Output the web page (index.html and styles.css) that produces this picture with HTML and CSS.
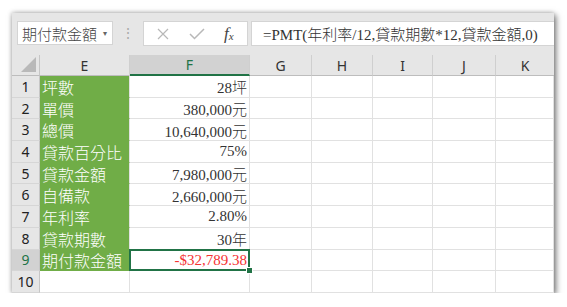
FILE: index.html
```html
<!DOCTYPE html>
<html lang="zh-Hant">
<head>
  <meta charset="UTF-8" />
  <title>期付款金額 - PMT</title>
  <link rel="stylesheet" href="styles.css">
</head>
<body>
  <div class="window">
    <div class="toolbar">
      <div class="namebox">期付款金額<span class="drop">▾</span></div>
      <div class="grip">⋮</div>
      <div class="fxbox">
        <svg class="cancel" width="12" height="12" viewBox="0 0 12 12"><path d="M1 1L11 11M11 1L1 11" stroke="#b8b8b8" stroke-width="1.2" fill="none"/></svg>
        <svg class="ok" width="16" height="12" viewBox="0 0 16 12"><path d="M1 6L5.5 10.5L15 1" stroke="#b8b8b8" stroke-width="1.5" fill="none"/></svg>
        <span class="fx">f<sub>x</sub></span>
      </div>
      <div class="formula">=PMT(年利率/12,貸款期數*12,貸款金額,0)</div>
    </div>

    <div class="sheet">
      <div class="row head">
        <div class="corner"></div>
        <div class="colhead">E</div>
        <div class="colhead active">F</div>
        <div class="colhead">G</div>
        <div class="colhead">H</div>
        <div class="colhead">I</div>
        <div class="colhead">J</div>
        <div class="colhead last">K</div>
      </div>

      <div class="row">
        <div class="num">1</div><div class="cell label">坪數</div><div class="cell val">28坪</div>
        <div class="cell"></div><div class="cell"></div><div class="cell"></div><div class="cell"></div><div class="cell"></div>
      </div>
      <div class="row">
        <div class="num">2</div><div class="cell label">單價</div><div class="cell val">380,000元</div>
        <div class="cell"></div><div class="cell"></div><div class="cell"></div><div class="cell"></div><div class="cell"></div>
      </div>
      <div class="row">
        <div class="num">3</div><div class="cell label">總價</div><div class="cell val">10,640,000元</div>
        <div class="cell"></div><div class="cell"></div><div class="cell"></div><div class="cell"></div><div class="cell"></div>
      </div>
      <div class="row">
        <div class="num">4</div><div class="cell label">貸款百分比</div><div class="cell val">75%</div>
        <div class="cell"></div><div class="cell"></div><div class="cell"></div><div class="cell"></div><div class="cell"></div>
      </div>
      <div class="row">
        <div class="num">5</div><div class="cell label">貸款金額</div><div class="cell val">7,980,000元</div>
        <div class="cell"></div><div class="cell"></div><div class="cell"></div><div class="cell"></div><div class="cell"></div>
      </div>
      <div class="row">
        <div class="num">6</div><div class="cell label">自備款</div><div class="cell val">2,660,000元</div>
        <div class="cell"></div><div class="cell"></div><div class="cell"></div><div class="cell"></div><div class="cell"></div>
      </div>
      <div class="row">
        <div class="num">7</div><div class="cell label">年利率</div><div class="cell val">2.80%</div>
        <div class="cell"></div><div class="cell"></div><div class="cell"></div><div class="cell"></div><div class="cell"></div>
      </div>
      <div class="row">
        <div class="num">8</div><div class="cell label">貸款期數</div><div class="cell val">30年</div>
        <div class="cell"></div><div class="cell"></div><div class="cell"></div><div class="cell"></div><div class="cell"></div>
      </div>
      <div class="row">
        <div class="num active">9</div><div class="cell label">期付款金額</div><div class="cell val neg selected">-$32,789.38</div>
        <div class="cell"></div><div class="cell"></div><div class="cell"></div><div class="cell"></div><div class="cell"></div>
      </div>
      <div class="row">
        <div class="num">10</div><div class="cell"></div><div class="cell"></div>
        <div class="cell"></div><div class="cell"></div><div class="cell"></div><div class="cell"></div><div class="cell"></div>
      </div>
    </div>
  </div>
</body>
</html>
```

FILE: styles.css
```css
body {
  margin: 0;
  background: #fff;
  font-family: "Noto Sans", "Noto Sans CJK TC", sans-serif;
}
.window {
  margin: 13px 0 0 12px;
  width: 542px;
  height: 280px;
  background: #e6e6e6;
  box-shadow: 2px 2px 6px rgba(0,0,0,0.55), -1px -1px 4px rgba(0,0,0,0.15);
  overflow: hidden;
}
.toolbar {
  height: 42px;
  box-sizing: border-box;
  padding: 8px 0 0 5px;
  display: flex;
  align-items: flex-start;
}
.namebox {
  width: 96px;
  height: 24px;
  box-sizing: border-box;
  background: #fff;
  border: 1px solid #d4d4d4;
  display: flex;
  align-items: center;
  padding-left: 4px;
  font-family: "Liberation Serif", "Noto Sans CJK TC", serif;
  font-size: 15px;
  font-weight: 300;
  color: #444;
}
.drop {
  font-size: 8px;
  color: #666;
  margin-left: 6px;
}
.grip {
  width: 30px;
  text-align: center;
  color: #aaa;
  font-size: 14px;
  line-height: 24px;
}
.fxbox {
  width: 105px;
  height: 25px;
  box-sizing: border-box;
  background: #fff;
  border: 1px solid #d4d4d4;
  display: flex;
  align-items: center;
  padding: 0 0 0 13px;
}
.cancel {
  margin-right: 20px;
}
.ok {
  margin-right: 19px;
}
.fx {
  font-family: "Liberation Serif", serif;
  font-style: italic;
  font-size: 17px;
  color: #444;
}
.fx sub {
  font-size: 11px;
  vertical-align: -1px;
}
.formula {
  flex: 1;
  height: 25px;
  margin-left: 3px;
  box-sizing: border-box;
  background: #fff;
  border: 1px solid #d4d4d4;
  border-right: none;
  padding-left: 11px;
  display: flex;
  align-items: center;
  font-family: "Liberation Serif", "Noto Sans CJK TC", serif;
  font-size: 15px;
  font-weight: 300;
  color: #333;
  white-space: nowrap;
}
.sheet {
  background: #fff;
}
.row {
  display: grid;
  grid-template-columns: 28px 90px 120px 62px 61px 60px 63px 1fr;
  height: 21.7px;
}
.row.head {
  height: 21px;
  background: #e6e6e6;
}
.corner {
  position: relative;
  border-right: 1px solid #c6c6c6;
  border-bottom: 1px solid #bdbdbd;
}
.corner::after {
  content: "";
  position: absolute;
  right: 3px;
  bottom: 3px;
  border-left: 15px solid transparent;
  border-bottom: 15px solid #b9b9b9;
}
.colhead {
  border-right: 1px solid #cfcfcf;
  border-bottom: 1px solid #bdbdbd;
  display: flex;
  align-items: center;
  justify-content: center;
  font-size: 14px;
  color: #333;
}
.colhead.active {
  background: #d2d2d2;
  color: #217346;
  border-bottom: 2px solid #217346;
}
.colhead.last {
  border-right: none;
}
.num {
  background: #e6e6e6;
  border-right: 1px solid #c6c6c6;
  border-bottom: 1px solid #d6d6d6;
  display: flex;
  align-items: center;
  justify-content: center;
  font-size: 14px;
  color: #222;
}
.num.active {
  background: #d2d2d2;
  color: #217346;
}
.cell {
  border-right: 1px solid #e1e1e1;
  border-bottom: 1px solid #e1e1e1;
  display: flex;
  align-items: center;
  padding-top: 1px;
  font-family: "Liberation Serif", "Noto Sans CJK TC", serif;
  font-size: 15px;
  font-weight: 300;
  white-space: nowrap;
  overflow: hidden;
}
.label {
  background: #70ad47;
  border-bottom-color: #70ad47;
  color: #fff;
  font-size: 16px;
  padding-left: 2px;
}
.val {
  justify-content: flex-end;
  padding-right: 2px;
  color: #333;
}
.neg {
  color: #f53232;
}
.selected {
  position: relative;
  overflow: visible;
}
.selected::before {
  content: "";
  position: absolute;
  top: -1px;
  left: -1px;
  right: -1px;
  bottom: -1px;
  border: 2px solid #217346;
}
.selected::after {
  content: "";
  position: absolute;
  right: -4px;
  bottom: -4px;
  width: 5px;
  height: 5px;
  background: #217346;
  border: 1px solid #fff;
}
```
